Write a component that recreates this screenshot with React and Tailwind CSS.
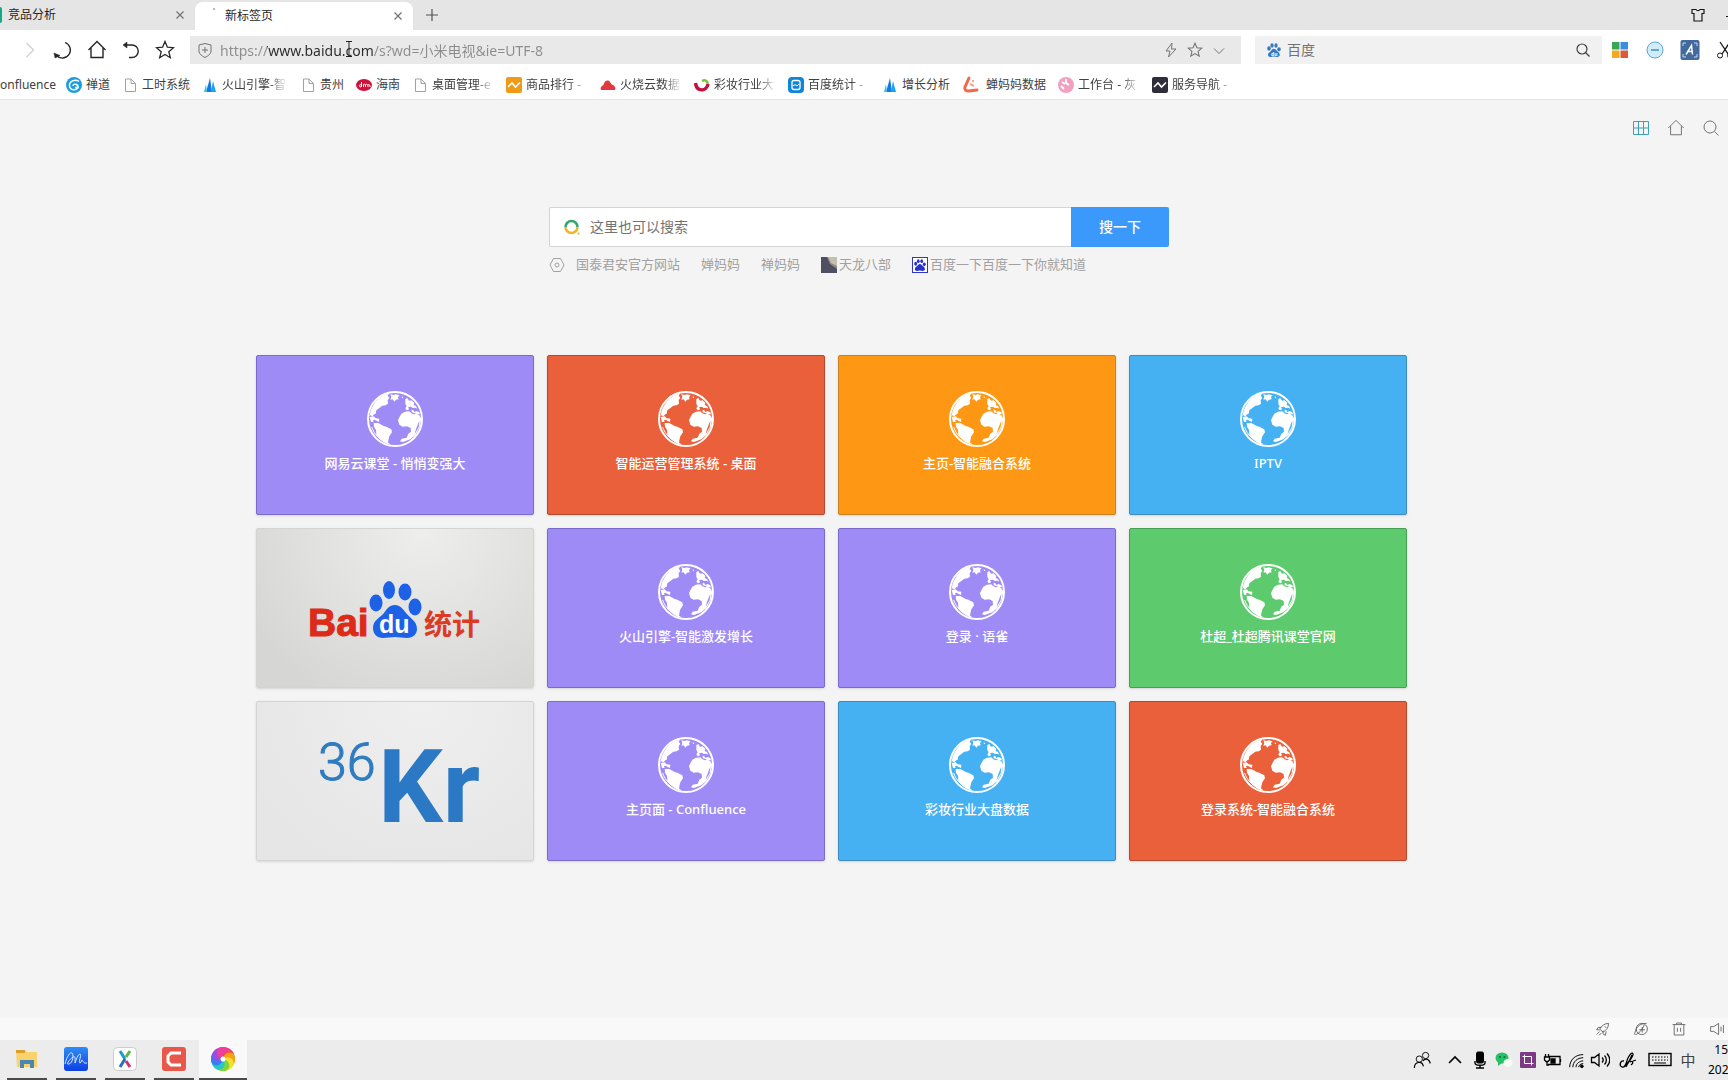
import React from "react";

const FONT = "font-['Noto_Sans','Noto_Sans_CJK_SC',sans-serif]";

function Svg({ size = 20, box = 20, sw = 1, className = "", children }) {
  return (
    <svg
      width={size}
      height={size}
      viewBox={`0 0 ${box} ${box}`}
      fill="none"
      stroke="currentColor"
      strokeWidth={sw}
      className={`shrink-0 ${className}`}
      aria-hidden="true"
    >
      {children}
    </svg>
  );
}

const STAR = "M10 1.500l2.400 5.700 6.100.5-4.700 4 1.500 6L10 14.400l-5.300 3.300 1.500-6-4.700-4 6.100-.5z";
const HOUSE = "M1.500 10L10 1.500l8.500 8.500M4 8v9.500h12V8";

function Paw({ size, color, children }) {
  return (
    <Svg size={size} box={56}>
      <g fill={color} stroke="none">
        <ellipse cx="8" cy="22" rx="7" ry="9" />
        <ellipse cx="20" cy="10" rx="6.500" ry="9" />
        <ellipse cx="36" cy="10" rx="6.500" ry="9" />
        <ellipse cx="48" cy="25" rx="7" ry="8.500" />
        <path d="M27 23c-6 0-8 5-12 10-4 4-11 7-11 14 0 6 4 9 10 9 5 0 8-2 13-2s9 2 14 2c6 0 10-4 10-9 0-8-7-11-11-15-4-5-7-9-13-9z" />
      </g>
      {children}
    </Svg>
  );
}

function Globe() {
  return (
    <svg width="56" height="56" viewBox="0 0 168 168" aria-hidden="true">
      <circle cx="84" cy="84" r="81" fill="none" stroke="#fff" strokeWidth="6" />
      <g fill="#fff">
        <path d="M8 74C12 40 38 12 66 8l-4 6 5 6-5 8 1 10-7 5-10 1-8 6-10 8-2 10-4 2-6 6-8-4-2 4z" />
        <path d="M70 10l10 2 6-2 12 3-5 5 2 7-8 1-5 6-5-7-7 1 3-8zM104 16l5 3-4 3zM115 24l6-3 5 8 8-1 8 8-2 6 7 3 4 8-6-3-8 1-5-4-9 2 3 5-7 4-4-6 4-6-4-7zM118 51l8 3-3 4-7-3zM134 56l5 2 3 5 7-3 8 4 2 6-10 0-7-4-8-2z" />
        <path d="M8 78l12-2 6 6 11 1-1 10-7-3-6-4-5 2 2 5-8 0zM20 96l14 0 16 9 8 2 15 8 2 9-8 12-3 12-1 12c-16-7-28-18-35-29l-1-14-6-10z" />
        <path d="M97 79l6-11 11-6 13-1 6 6 8 3 8-2 8 5 6 10-5 24-12 24-16 14-22 8-9-2 5-8 15-3 5-12 8-6-1-11-11-5-13 1-10-6-4-13z" />
      </g>
      <path d="M153 98l4-8-2 18-12 22 3-13z" fill="currentColor" />
      <path d="M14 108c8 24 26 40 48 48M62 156l8 5" stroke="#fff" strokeWidth="3" fill="none" />
    </svg>
  );
}

const PageIcon = () => (
  <Svg size={16} box={16} className="text-neutral-400">
    <path d="M3.500 2h5.500l4.500 4.500V14.500H3.500zM9 2v4.500h4.500" />
  </Svg>
);
const Sail = () => (
  <Svg size={16} box={16}>
    <g stroke="none">
      <path d="M8 1l2 14H4z" fill="#1677e8" />
      <path d="M4 7l1 8H2z" fill="#2bc4ef" />
      <path d="M11 4l3 11H9z" fill="#19a5ea" />
    </g>
  </Svg>
);

const BOOKMARKS = [
  ["禅道", "", (
    <Svg size={16} box={16}>
      <circle cx="8" cy="8" r="8" fill="#1d9ddc" stroke="none" />
      <path d="M13 4.500C9 1.500 3 4.500 3.500 9c.5 4.500 7 5 8.500 1C12 7 7.500 6 7 9M9 10.500h4" stroke="#fff" strokeWidth="1.500" />
    </Svg>
  )],
  ["工时系统", "", <PageIcon />],
  ["火山引擎-智", "w-[66px]", <Sail />],
  ["贵州", "", <PageIcon />],
  ["海南", "", (
    <Svg size={16} box={16}>
      <ellipse cx="8" cy="8" rx="8" ry="6" fill="#cf1239" stroke="none" />
      <path d="M5.500 5v5M5.500 8c-2.500-1-3 2-.5 2M7.500 10V7.500c2-1 2 0 2 2.500M9.500 8c1.500-1.500 2.500-.5 2.500 2M12 8c1.500-1 2 0 2 2" stroke="#fff" />
    </Svg>
  )],
  ["桌面管理-e", "w-[62px]", <PageIcon />],
  ["商品排行 -", "w-[62px]", (
    <Svg size={16} box={16}>
      <rect width="16" height="16" rx="2" fill="#f09a18" stroke="none" />
      <path d="M2 10l4-4 3.500 4L14 5.500" stroke="#fff" strokeWidth="1.600" />
    </Svg>
  )],
  ["火烧云数据", "w-[62px]", (
    <Svg size={16} box={16}>
      <path d="M1 13c-1-2 0-4 2.500-5C4 4 8 2 10 5c1.500 2 1 2 3 3s3 3 2 5z" fill="#e0393f" stroke="none" />
    </Svg>
  )],
  ["彩妆行业大", "w-[62px]", (
    <Svg size={16} box={16} sw={3.500}>
      <path d="M1.500 6c1 9 11 9 12.500 1" stroke="#c5103f" />
      <path d="M8 4c3-1.500 5-.5 6 3" stroke="#7cc142" strokeWidth="2.500" />
    </Svg>
  )],
  ["百度统计 -", "w-[62px]", (
    <Svg size={16} box={16}>
      <rect width="16" height="16" rx="4" fill="#0f86d8" stroke="none" />
      <rect x="4" y="3.500" width="8" height="9" rx="2" stroke="#fff" strokeWidth="1.300" />
      <path d="M5 9l2-1.500 2 1.500 2-2" stroke="#fff" />
    </Svg>
  )],
  ["增长分析", "", <Sail />],
  ["蝉妈妈数据", "", (
    <Svg size={20} box={20} sw={3}>
      <path d="M7 3L3 12c-1 3 1 4 4 4l8-1" stroke="#f2684a" strokeLinecap="round" />
      <path d="M8 9l4 2M11 5v2" stroke="#f7a58f" strokeWidth="2" />
    </Svg>
  )],
  ["工作台 - 灰", "w-[62px]", (
    <Svg size={16} box={16}>
      <circle cx="8" cy="8" r="8" fill="#f3a0bf" stroke="none" />
      <path d="M3 9l3 3M8 2v4l3 2M4 5l3 2" stroke="#fff" strokeWidth="1.800" />
    </Svg>
  )],
  ["服务导航 -", "w-[62px]", (
    <Svg size={16} box={16}>
      <rect width="16" height="16" rx="2" fill="#2f2d3a" stroke="none" />
      <path d="M2 10l4-4 3.500 4L14 5.500" stroke="#fff" strokeWidth="1.600" />
    </Svg>
  )],
];

const NAV = [
  ["前进", "text-neutral-300", <path d="M7.500 3l7 7-7 7" strokeWidth="1.500" />],
  ["刷新", "text-neutral-800", <><path d="M12 2.500a8 8 0 1 1-8.500 13" strokeWidth="1.300" /><path d="M1 13l1 5 5-2.500z" fill="currentColor" strokeWidth=".5" /></>],
  ["主页", "text-neutral-800", <path d={HOUSE} strokeWidth="1.400" />],
  ["撤销", "text-neutral-800", <><path d="M4 5h7a6 6 0 0 1 0 12.500H8" strokeWidth="1.400" /><path d="M6 2v6L2 5z" fill="currentColor" strokeWidth=".5" /></>],
  ["收藏", "text-neutral-800", <path d={STAR} strokeWidth="1.300" />],
];

const P = "bg-[#9e8bf5] border-[#7d6bcb] text-[#9e8bf5]";
const R = "bg-[#ea603b] border-[#b34a30] text-[#ea603b]";
const O = "bg-[#fe9814] border-[#c9821f] text-[#fe9814]";
const B = "bg-[#45b1f3] border-[#3f8dc0] text-[#45b1f3]";
const G = "bg-[#5dca6e] border-[#45a056] text-[#5dca6e]";

const TILES = [
  ["网易云课堂 - 悄悄变强大", P],
  ["智能运营管理系统 - 桌面", R],
  ["主页-智能融合系统", O],
  ["IPTV", B],
  ["baidu", "bg-[radial-gradient(ellipse_at_60%_0%,#eeeeed,#d6d6d5_85%)] border-neutral-300"],
  ["火山引擎-智能激发增长", P],
  ["登录 · 语雀", P],
  ["杜超_杜超腾讯课堂官网", G],
  ["36kr", "bg-[radial-gradient(ellipse_at_60%_0%,#efefef,#e6e6e6_80%)] border-neutral-300"],
  ["主页面 - Confluence", P],
  ["彩妆行业大盘数据", B],
  ["登录系统-智能融合系统", R],
];

function BaiduLogo() {
  return (
    <svg width="190" height="90" viewBox="-5 -13 190 90" aria-hidden="true">
      <text x="3" y="60" fontFamily="Liberation Sans" fontWeight="700" fontSize="39" fill="#dc2b17" stroke="#dc2b17">Bai</text>
      <g fill="#1d62e6">
        <ellipse cx="71" cy="27" rx="6.500" ry="8.500" />
        <ellipse cx="84" cy="14" rx="6" ry="9" />
        <ellipse cx="100" cy="16" rx="6.500" ry="8.500" />
        <ellipse cx="110" cy="31" rx="6.500" ry="8.500" />
        <path d="M90 29c-6 0-8 4-11 8-4 5-11 7-11 15 0 6 4 10 10 10 4 0 8-1 12-1s8 1 12 1c6 0 10-4 10-9 0-8-7-11-11-16-3-4-6-8-11-8z" />
      </g>
      <text x="74" y="57" fontFamily="Liberation Sans" fontWeight="700" fontSize="25" fill="#fff">du</text>
      <text x="119" y="59" fontFamily="Noto Sans CJK SC" fontWeight="700" fontSize="28" fill="#dc3a22">统计</text>
    </svg>
  );
}

function KrLogo() {
  return (
    <svg width="190" height="136" viewBox="-8 -25 190 136" aria-hidden="true">
      <text x="10" y="42" fontFamily="Roboto" fontWeight="300" fontSize="52" fill="#2f7cc0" stroke="#2f7cc0">36</text>
      <text x="70" y="84" fontFamily="Roboto" fontWeight="700" fontSize="102" fill="#2b79c4">Kr</text>
    </svg>
  );
}

function Tile({ name, tone }) {
  const logo = name === "baidu" ? <BaiduLogo /> : name === "36kr" ? <KrLogo /> : null;
  return (
    <a
      href="#"
      aria-label={name}
      className={`flex h-40 flex-col items-center justify-center rounded-xs border shadow-sm ${tone}`}
    >
      {logo ? (
        logo
      ) : (
        <>
          <Globe />
          <span className="mt-1 mb-1 text-[13px] leading-6 font-medium text-white">{name}</span>
        </>
      )}
    </a>
  );
}

const APPS = [
  ["文件资源管理器", <Svg size={24} box={24}><g stroke="none"><path d="M1 3h9l2 2h10v15H2z" fill="#f8d36b" /><path d="M1 3h9v3H1z" fill="#d9a02c" /><path d="M5 13h14v8h-4v-4H9v4H5z" fill="#4b86b4" /></g></Svg>],
  ["图表", (
    <Svg size={24} box={24}>
      <defs>
        <linearGradient id="app-blue" x1="0" y1="0" x2="0" y2="1">
          <stop offset="0" stopColor="#2f8df5" />
          <stop offset="1" stopColor="#0d3fe6" />
        </linearGradient>
      </defs>
      <rect width="24" height="24" rx="3" fill="url(#app-blue)" stroke="none" />
      <path d="M1 17c2-8 5-12 7-11s1 10-3 11 1-5 4-7 2 4 2 6c1-3 3-9 5-9s-2 9 0 9c2-1 1-3 2-3s1 4 5 3" stroke="#dbe9ff" />
    </Svg>
  )],
  ["原型", <Svg size={24} box={24} sw={3}><rect x=".5" y=".5" width="23" height="23" rx="4" fill="#fff" stroke="#ccc" strokeWidth="1" /><path d="M7 4l5 8" stroke="#1b9ad2" /><path d="M12 12l-5 8" stroke="#2a6fb5" /><path d="M17 4l-4 6" stroke="#5fb548" /><path d="M13 14l4 6" stroke="#d5326c" /></Svg>],
  ["录屏", <Svg size={24} box={24}><rect width="24" height="24" rx="3" fill="#e9574b" stroke="none" /><path d="M19 6H9L6 9v6l3 3h10" stroke="#fff" strokeWidth="3" /></Svg>],
  ["浏览器", (
    <Svg size={24} box={24}>
      <g stroke="none">
        {["#f0503c", "#f9a01b", "#f7e02c", "#7ed63a", "#25c7c9", "#3b7bf0", "#9b4be0", "#ee3fa0"].map((c, i) => (
          <path key={c} d="M12 12C8 6 12 0 18 1.500c5 2.500 6 7 5.500 11C21 8 16 7 12 12z" fill={c} transform={`rotate(${i * 45} 12 12)`} />
        ))}
        <circle cx="12" cy="12" r="2.500" fill="#fff" />
      </g>
    </Svg>
  )],
];

const STATUS = [
  ["加速", <path d="M6 10c2-4 6-7 11-7 0 5-3 9-7 11zM8 8H4L2 11l4 0M10 12v4l3 2 1-5M6 13l-4 4M8 15l-3 3M12 6.500l2 2" />],
  ["兼容模式", <><circle cx="11" cy="10" r="7" /><path d="M2 17C3 8 8 3 17 3M3 17c4-1 8-5 11-12M8 11h7M11.500 7.500v7" /></>],
  ["清理", <path d="M2 4.500h16M7 4.500v-2h6v2M4 4.500v13h12v-13M8 8.500v5M12 8.500v5" />],
  ["声音", <path d="M2 7h4l6-4v14l-6-4H2zM15 7v6M18 5v10" />],
];

const TRAY = [
  ["人脉", "w-[40px]", <Svg size={18}><circle cx="14" cy="5" r="3.500" /><circle cx="7" cy="9" r="3.500" /><path d="M1.500 19c0-8 9-8 10-2M11 11c3-4 8-1 8 3" strokeWidth="1.300" /></Svg>],
  ["展开", "w-[26px]", <Svg sw={1.600}><path d="M4 13l6-6 6 6" /></Svg>],
  ["麦克风", "w-[24px]", <Svg><rect x="6.500" y="2" width="7" height="11" rx="1.500" fill="currentColor" /><path d="M5 11v2c0 3 10 3 10 0v-2M10 15v3M6 18h8" strokeWidth="1.400" /></Svg>],
  ["微信", "w-[24px]", <Svg><g stroke="none"><ellipse cx="8" cy="8" rx="6.500" ry="5.500" fill="#27c168" /><path d="M4 11l0 5 4-3z" fill="#27c168" /><circle cx="6" cy="7" r="1" fill="#0b6b38" /><circle cx="10.500" cy="7" r="1" fill="#0b6b38" /><ellipse cx="14" cy="13" rx="4.500" ry="4" fill="#f7fbf4" /></g></Svg>],
  ["截图", "w-[24px]", <Svg size={16} box={16}><rect width="16" height="16" rx="1" fill="#7c3a84" stroke="none" /><path d="M4.500 2.500v9h9M2.500 4.500h9v9" stroke="#fff" /></Svg>],
  ["电池", "w-[24px]", <Svg sw={1.300}><path d="M7 6.500h11v8H6M18.500 9v3M3.500 4v3M6.500 4v3M2.500 7h5v3l-1.500 1.500h-2L2.500 10zM5 12v3h2" /><path d="M9 9h4v4H9z" fill="currentColor" /></Svg>],
  ["网络", "w-[24px]", <Svg size={18} sw={1.100}><path d="M3 18C3 10 9 4 18 4M6.500 18c0-6 5-10.500 11.500-10.500M10 18c0-4 4-7 8-7M13 18c0-2 2-4 5-4" /><circle cx="16.500" cy="17" r="1.500" fill="currentColor" /></Svg>],
  ["音量", "w-[24px]", <Svg sw={1.300}><path d="M1.500 7.500h3L9 4v12l-4.500-3.500h-3zM12 7.500c1.500 1.500 1.500 3.500 0 5M14.500 5.500c2.500 2.500 2.500 6.500 0 9M17 3.500c3.500 4 3.500 9 0 13" /></Svg>],
  ["手写笔", "w-[32px]", <Svg sw={1.300}><path d="M6 11C2 10 1 16 4 17c4 1 4-5 6-9s4-6 5-4-6 9-7 13M8 15c3-3 5-7 6-10M12 12c3-2 4 1 1 3M15 11l3-1" /></Svg>],
  ["触摸键盘", "w-[32px]", <svg width="24" height="16" viewBox="0 0 24 16" fill="none" stroke="currentColor" aria-hidden="true"><rect x="1" y="1.500" width="22" height="12" strokeWidth="1.400" /><path d="M4 5h16M4 8h16" strokeDasharray="1.500 1.500" /><path d="M6 11h12" /></svg>],
];

function Tab({ title, active }) {
  return (
    <div
      role="tab"
      aria-selected={!!active}
      className={`flex items-center text-xs text-neutral-800 ${
        active ? "mt-0.5 w-[218px] rounded-t-lg bg-white" : "w-[193px] pl-1.5"
      }`}
    >
      {active && (
        <span className="flex w-[30px] justify-center self-start pt-1.5 pl-2">
          <span className="size-0.5 rounded-full bg-neutral-400" />
        </span>
      )}
      <span className="flex-1">{title}</span>
      <button aria-label="关闭标签页" className="mr-[7px] flex size-4 items-center justify-center text-neutral-500">
        <Svg size={8} box={8} sw={1.200}>
          <path d="M.5.5l7 7M7.500.5l-7 7" />
        </Svg>
      </button>
    </div>
  );
}

export default function App() {
  return (
    <div className={`flex min-h-screen flex-col overflow-hidden bg-[#f4f4f4] ${FONT}`}>
      <header className="bg-white">
        <div className="flex h-[30px] bg-[#e6e5e5]">
          <div className="flex" role="tablist">
            <span className="mt-[7px] h-4 w-0.5 rounded-r-xs bg-[#12a983]" />
            <Tab title="竞品分析" />
            <Tab title="新标签页" active />
          </div>
          <button aria-label="新建标签页" className="ml-[7px] flex w-6 items-center justify-center text-neutral-600">
            <Svg size={12} box={12} sw={1.200}><path d="M6 0v12M0 6h12" /></Svg>
          </button>
          <div className="flex-1" />
          <button aria-label="换肤" className="flex w-8 items-center justify-center text-neutral-900">
            <Svg size={14} box={14} sw={1.200}>
              <path d="M1 1.500h4c1 1.500 3 1.500 4 0h4v4h-2v7.500H3V5.500H1z" />
            </Svg>
          </button>
          <span className="mt-4 ml-3 h-px w-0.5 bg-neutral-900" />
        </div>

        <div className="flex h-10 items-center pl-3">
          {NAV.map(([label, tone, icon]) => (
            <button key={label} aria-label={label} className={`flex w-[34px] shrink-0 justify-center ${tone}`}>
              <Svg>{icon}</Svg>
            </button>
          ))}
          <div className="relative ml-2 flex h-7 min-w-0 flex-1 items-center gap-1 bg-[#e9e9e9] pr-2.5 pl-[7px]">
            <Svg size={16} box={16} className="text-neutral-500">
              <path d="M8 1.500L14 3v6c0 3-3 5-6 6.500C5 14 2 12 2 9V3zM8 5v6M5 8h6" />
            </Svg>
            <input
              aria-label="地址栏"
              defaultValue="https://www.baidu.com/s?wd=小米电视&ie=UTF-8"
              className="h-7 min-w-0 flex-1 bg-[linear-gradient(90deg,#8c8c8c_50px,#2b2b2b_50px,#2b2b2b_156px,#8c8c8c_156px)] bg-clip-text pl-[3px] text-sm text-transparent outline-none"
            />
            <svg width="8" height="18" viewBox="0 0 8 18" stroke="#222" className="absolute top-1 left-[155px]" aria-hidden="true">
              <path d="M1 1.500h6M4 1.500v15M1 16.500h6" />
            </svg>
            <div className="flex w-[72px] justify-around text-neutral-500">
              <button aria-label="极速模式"><Svg size={16} box={16}><path d="M9 1L3 9h4l-1.500 6L13 7H8.500z" /></Svg></button>
              <button aria-label="收藏此页"><Svg size={16}><path d={STAR} strokeWidth="1.300" /></Svg></button>
              <button aria-label="更多"><Svg size={16} box={16}><path d="M3 6.500l5 5 5-5" /></Svg></button>
            </div>
          </div>
          <div className="ml-3.5 flex h-7 w-[347px] items-center gap-1 bg-[#f1f1f1] px-3">
            <Paw size={14} color="#3578c4">
              <text x="16" y="51" fontSize="20" fontWeight="700" fill="#fff" stroke="none">du</text>
            </Paw>
            <input
              aria-label="百度搜索"
              placeholder="百度"
              className="min-w-0 flex-1 pl-0.5 text-sm outline-none placeholder:text-neutral-500"
            />
            <button aria-label="搜索" className="text-neutral-700">
              <Svg size={14} box={14} sw={1.200}><circle cx="6" cy="6" r="5" /><path d="M9.500 9.500L13.500 13.500" /></Svg>
            </button>
          </div>
          <div className="flex w-[126px] items-center overflow-hidden">
            {[
              ["应用", <Svg size={16} box={16}><g stroke="none"><path d="M0 0h7.500v7.500H0z" fill="#3aa757" /><path d="M8.500 0H16v7.500H8.500z" fill="#3a8de0" /><path d="M0 8.500h7.500V16H0z" fill="#f2a91e" /><path d="M8.500 8.500H16V16H8.500z" fill="#e0583c" /></g></Svg>],
              ["拦截", <Svg size={18} box={18}><circle cx="9" cy="9" r="8" fill="#d3ecfa" stroke="#5aa6d6" /><path d="M5 9h8" stroke="#3d8fc8" strokeWidth="1.500" /></Svg>],
              ["翻译", <Svg size={20} box={20}><rect x=".5" width="19" height="20" rx="2" fill="#426a9f" stroke="none" /><path d="M3 6V3h3M14 3h3v3M3 14v3h3M14 17h3v-3" stroke="#c8d6ea" /><path d="M6 14.500l5.500-9 1 9M8 11.500h4.500" stroke="#fff" strokeWidth="1.500" /></Svg>],
              ["截图", <Svg size={18} box={18}><path d="M4 1l8 12M14 1L6 13" strokeWidth="1.300" /><circle cx="4" cy="14.500" r="2.500" /><circle cx="14" cy="14.500" r="2.500" /></Svg>],
            ].map(([label, icon]) => (
              <button key={label} aria-label={label} className="flex w-[35px] shrink-0 justify-center text-neutral-900">
                {icon}
              </button>
            ))}
          </div>
        </div>

        <nav className="flex h-[30px] items-center gap-3 border-b border-neutral-200 text-xs whitespace-nowrap text-neutral-700">
          <a href="#" className="w-[54px] shrink-0">onfluence</a>
          {BOOKMARKS.map(([label, width, icon]) => (
            <a key={label} href="#" className="flex shrink-0 items-center gap-1">
              {icon}
              <span
                className={
                  width
                    ? `overflow-hidden [mask-image:linear-gradient(90deg,#000_70%,transparent)] ${width}`
                    : ""
                }
              >
                {label}
              </span>
            </a>
          ))}
        </nav>
      </header>

      <main className="flex-1">
        <div className="flex h-14 items-center justify-end gap-[17px] pr-2 text-neutral-500">
          <button aria-label="九宫格" className="text-[#3f9fb8]">
            <Svg size={18} box={18}><path d="M1.500 2.500h15v13h-15zM1.500 9h15M6.500 2.500v13M11.500 2.500v13" /></Svg>
          </button>
          <button aria-label="主页"><Svg size={18}><path d={HOUSE} strokeWidth="1.100" /></Svg></button>
          <button aria-label="搜索"><Svg size={18} box={18}><circle cx="8" cy="8" r="6" /><path d="M12.500 12.500l4 4" /></Svg></button>
        </div>

        <div className="pr-[10px]">
          <section className="mx-auto mt-[51px] max-w-[620px]">
            <form className="flex h-10" onSubmit={(e) => e.preventDefault()}>
              <label className="flex flex-1 items-center gap-2.5 rounded-l-xs border border-r-0 border-neutral-300 bg-white pl-3.5">
                <Svg size={16} box={16} sw={2.500}>
                  <path d="M1.500 8a6 6 0 0 1 12 0" stroke="#35a56b" />
                  <path d="M13.500 8a6 6 0 0 1-12 0" stroke="#efb52c" />
                  <path d="M13.500 14.500h2" stroke="#efb52c" strokeWidth="2" />
                </Svg>
                <input
                  aria-label="搜索"
                  placeholder="这里也可以搜索"
                  className="min-w-0 flex-1 text-sm outline-none placeholder:text-neutral-500"
                />
              </label>
              <button className="w-[98px] rounded-r-xs bg-[#3b99fc] text-sm font-medium text-white">搜一下</button>
            </form>
            <div className="mt-2 flex h-5 items-center gap-[21px] text-[13px] whitespace-nowrap text-neutral-400">
              <a href="#" className="flex items-center gap-[11px]">
                <Svg size={16} box={16}>
                  <path d="M4.500 1.500h7L15 8l-3.500 6.500h-7L1 8z" /><circle cx="8" cy="8" r="2" />
                </Svg>
                国泰君安官方网站
              </a>
              <a href="#">婵妈妈</a>
              <a href="#">禅妈妈</a>
              <a href="#" className="flex items-center gap-0.5">
                <Svg size={16} box={16}>
                  <g stroke="none">
                    <path d="M0 0h16v16H0z" fill="#8e8c82" />
                    <path d="M0 0h6l3 7 7 5v4H0z" fill="#4e4f60" />
                    <path d="M7 0h9v9l-6-3z" fill="#c4bfae" />
                  </g>
                </Svg>
                天龙八部
              </a>
              <a href="#" className="flex items-center gap-0.5">
                <span className="border border-[#2f36c8] bg-white p-px"><Paw size={12} color="#2a30c8" /></span>
                百度一下百度一下你就知道
              </a>
            </div>
          </section>
        </div>

        <div className="px-8 pr-[97px]">
          <section className="mx-auto mt-20 grid max-w-[1151px] grid-cols-4 gap-[13px]">
            {TILES.map(([name, tone]) => (
              <Tile key={name} name={name} tone={tone} />
            ))}
          </section>
        </div>
      </main>

      <div className="flex h-[22px] items-center justify-end gap-[22px] bg-[#f9f9f9] pr-[3px] text-neutral-600">
        {STATUS.map(([label, icon]) => (
          <button key={label} aria-label={label}><Svg size={16}>{icon}</Svg></button>
        ))}
      </div>

      <footer className="flex h-10 justify-between bg-[#ececec] text-black">
        <div className="flex gap-[9px] pl-[7px]">
          {APPS.map(([label, icon], i) => (
            <button
              key={label}
              aria-label={label}
              className={`flex items-center justify-center border-b-2 border-[#4a4a4a] ${
                i === 4 ? "-ml-1 w-12 bg-[#f9f9f9]" : "w-10"
              }`}
            >
              {icon}
            </button>
          ))}
        </div>
        <div className="flex items-center">
          {TRAY.map(([label, width, icon]) => (
            <button key={label} aria-label={label} className={`flex justify-center ${width}`}>{icon}</button>
          ))}
          <span className="w-6 text-center text-[15px] text-neutral-700">中</span>
          <div className="ml-2 w-5 text-right text-xs leading-5 whitespace-nowrap">
            <div>15</div>
            <div>202</div>
          </div>
        </div>
      </footer>
    </div>
  );
}
